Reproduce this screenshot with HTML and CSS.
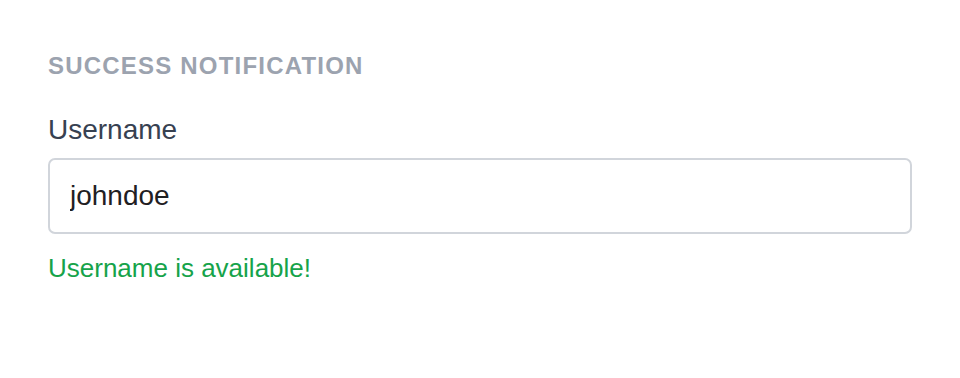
FILE: index.html
```html
<!DOCTYPE html>
<html lang="en">
<head>
<meta charset="utf-8">
<title>Success notification</title>
<link rel="stylesheet" href="styles.css">
</head>
<body>
<main class="page">
  <h2 class="section-title">Success Notification</h2>
  <div class="field">
    <label class="field-label" for="username">Username</label>
    <input class="field-input" id="username" type="text" value="johndoe">
    <p class="field-success">Username is available!</p>
  </div>
</main>
</body>
</html>
```

FILE: styles.css
```css
* { box-sizing: border-box; }
html, body { margin: 0; padding: 0; background: #ffffff; }
body { font-family: "Liberation Sans", Arial, sans-serif; }
.page {
  padding: 50px 48px 48px;
  display: flex;
  flex-direction: column;
}
.section-title {
  margin: 0;
  font-size: 24px;
  line-height: 32px;
  font-weight: 700;
  text-transform: uppercase;
  letter-spacing: 0.05em;
  color: #9ca3af;
}
.field {
  margin-top: 28px;
  display: flex;
  flex-direction: column;
}
.field-label {
  font-size: 28px;
  line-height: 40px;
  color: #374151;
}
.field-input {
  margin-top: 8px;
  width: 100%;
  height: 76px;
  padding: 0 20px;
  border: 2px solid #d1d5db;
  border-radius: 7px;
  font-family: "Liberation Sans", Arial, sans-serif;
  font-size: 28px;
  color: #1f2023;
  background: #ffffff;
  outline: none;
}
.field-success {
  margin: 16px 0 0;
  font-size: 26px;
  line-height: 36px;
  color: #16a34a;
}
```
